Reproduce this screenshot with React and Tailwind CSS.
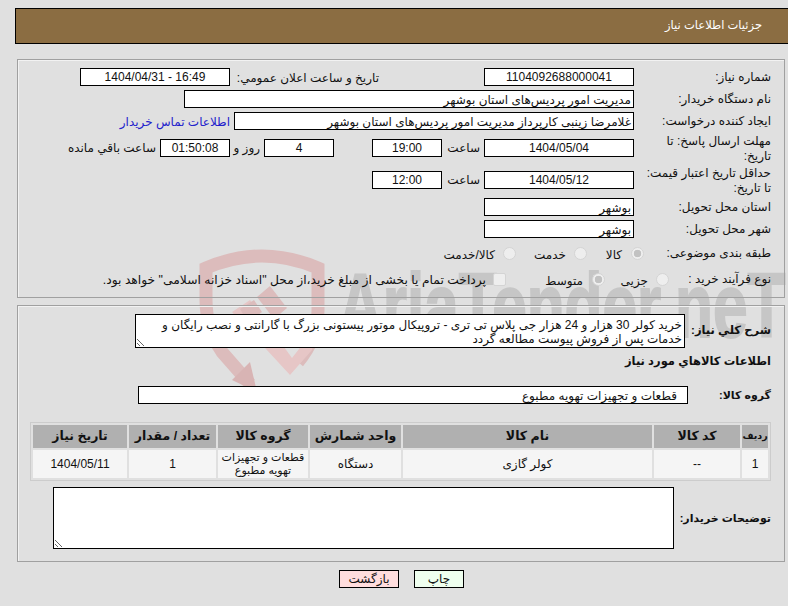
const font = { fontFamily: '"Liberation Sans", "DejaVu Sans", sans-serif' };

function Box({ className = "", dir, children }) {
  return (
    <div dir={dir} className={`h-[18px] shrink-0 overflow-hidden whitespace-nowrap border border-black bg-white ${className}`}>
      {children}
    </div>
  );
}

function Label({ children }) {
  return <div className="mt-[1px] w-[137px] shrink-0 whitespace-nowrap leading-[15px]">{children}</div>;
}

function Option({ className, gap, checked, square, children }) {
  return (
    <label className={`flex shrink-0 items-center ${className} ${gap}`}>
      <input
        type={square ? "checkbox" : "radio"}
        disabled
        checked={!!checked}
        readOnly
        className={
          square
            ? "m-0 h-[13px] w-[13px] shrink-0 appearance-none rounded-[2px] border border-[#d4d4d4] bg-[#eeeeee]"
            : "m-0 h-[13px] w-[13px] shrink-0 appearance-none rounded-full border border-[#d4d4d4] bg-[#eeeeee] checked:bg-[radial-gradient(circle,#c2c2c2_45%,#eeeeee_52%)]"
        }
      />
      <span className="mt-[3px] whitespace-nowrap">{children}</span>
    </label>
  );
}

function Watermark() {
  return (
    <div className="absolute inset-0 z-0 overflow-hidden">
      <svg className="absolute left-0 top-0" width="788" height="606" viewBox="0 0 788 606" fill="none">
        <path d="M250 384 L222 352 Q206 328 206 300 L206 268 Q262 244 318 268 L318 310 Q318 338 298 362" stroke="#dcbcbc" strokeWidth="13" />
        <path d="M232 380 L250 362 L257 392 Z" fill="#d8b4b4" />
        <path d="M232 312 L250 300 L292 358 L318 325 L312 350 L290 375 Z" fill="#e6c6c6" />
        <path d="M257 297 L270 286 L287 308 L274 319 Z" fill="#dcbcbc" />
        <path d="M240 309 L254 300 L262 312 L248 322 Z" fill="#dcbcbc" />
      </svg>
      <div
        className="absolute left-[338px] top-[251px] origin-left scale-x-[0.69] whitespace-nowrap text-[90px] font-bold leading-[110px] text-[#c6c6c6] [-webkit-text-stroke:2px_#c6c6c6]"
        style={{ fontFamily: '"Liberation Sans", sans-serif' }}
      >
        AriaTender.neT
      </div>
    </div>
  );
}

export default function App() {
  return (
    <div style={font} className="relative h-[606px] w-[788px] overflow-hidden bg-[#e0e0e0] text-[12px] text-[#111]">
      <Watermark />

      <div dir="rtl" className="relative z-10">
        {/* header */}
        <div className="mr-0 mt-[8px] flex h-[36px] w-[773px] items-center border border-r-0 border-black bg-[#8b6d42] pr-[26px] text-[11.5px] text-white">
          جزئيات اطلاعات نياز
        </div>

        {/* details panel */}
        <div className="mr-[3px] mt-[15px] h-[239px] w-[768px] border border-[#a0a0a0] pr-[13px] pt-[6px] shadow-[inset_1px_1px_0_#f2f2f2]">
          <div className="flex h-[22px] items-center">
            <Label>شماره نياز:</Label>
            <Box className="w-[150px] text-center leading-[17px]">1104092688000041</Box>
            <div className="mr-[105px] mt-[1px] w-[149px] shrink-0 whitespace-nowrap">تاريخ و ساعت اعلان عمومي:</div>
            <Box dir="ltr" className="w-[150px] text-center leading-[17px]">1404/04/31 - 16:49</Box>
          </div>
          <div className="flex h-[22px] items-center">
            <Label>نام دستگاه خريدار:</Label>
            <Box className="w-[450px] pr-[2px] leading-[18px]">مديريت امور پرديس‌هاى استان بوشهر</Box>
          </div>
          <div className="flex h-[22px] items-center">
            <Label>ايجاد كننده درخواست:</Label>
            <Box className="w-[400px] pr-[2px] leading-[18px]">غلامرضا زينبى كارپرداز مديريت امور پرديس‌هاى استان بوشهر</Box>
            <a className="mr-[4px] mt-[1px] text-[#2222cc]">اطلاعات تماس خريدار</a>
          </div>
          <div className="flex h-[32px] items-center">
            <Label>مهلت ارسال پاسخ: تا<br />تاريخ:</Label>
            <Box className="w-[150px] text-center leading-[17px]">1404/05/04</Box>
            <div className="w-[42px] shrink-0 pr-[4px]">ساعت</div>
            <Box className="w-[70px] text-center leading-[17px]">19:00</Box>
            <div className="w-[38px] shrink-0" />
            <Box className="w-[70px] text-center leading-[17px]">4</Box>
            <div className="w-[34px] shrink-0 pr-[4px]">روز و</div>
            <Box className="w-[70px] bg-[#ffffee] text-center leading-[17px]">01:50:08</Box>
            <div className="mr-[4px]">ساعت باقي مانده</div>
          </div>
          <div className="flex h-[32px] items-center">
            <Label>حداقل تاريخ اعتبار قيمت:<br />تا تاريخ:</Label>
            <Box className="w-[150px] text-center leading-[17px]">1404/05/12</Box>
            <div className="w-[42px] shrink-0 pr-[4px]">ساعت</div>
            <Box className="w-[70px] text-center leading-[17px]">12:00</Box>
          </div>
          <div className="flex h-[22px] items-center">
            <Label>استان محل تحويل:</Label>
            <Box className="w-[150px] pr-[2px] leading-[18px]">بوشهر</Box>
          </div>
          <div className="flex h-[22px] items-center">
            <Label>شهر محل تحويل:</Label>
            <Box className="w-[150px] pr-[2px] leading-[18px]">بوشهر</Box>
          </div>
          <div className="flex h-[26px] items-center">
            <Label>طبقه بندى موضوعى:</Label>
            <Option className="mr-[-10px] w-[57px]" gap="gap-[9px]" checked>كالا</Option>
            <Option className="w-[71px]" gap="gap-[8px]">خدمت</Option>
            <Option className="w-[90px]" gap="gap-[8px]">كالا/خدمت</Option>
          </div>
          <div className="flex h-[26px] items-center">
            <Label>نوع فرآيند خريد :</Label>
            <Option className="mr-[-35px] w-[64px]" gap="gap-[8px]">جزيى</Option>
            <Option className="w-[99px]" gap="gap-[9px]" checked>متوسط</Option>
            <Option className="w-[400px] text-[12.3px]" gap="gap-[7px]" square>پرداخت تمام يا بخشى از مبلغ خريد،از محل "اسناد خزانه اسلامى" خواهد بود.</Option>
          </div>
        </div>

        {/* goods panel */}
        <div className="mr-[3px] mt-[7px] h-[257px] w-[768px] border border-[#a0a0a0] pr-[13px] pt-[8px] shadow-[inset_1px_1px_0_#f2f2f2]">
          <div className="flex h-[34px] items-center">
            <div className="w-[86px] shrink-0 whitespace-nowrap text-[11.5px] font-bold">شرح كلي نياز:</div>
            <textarea
              readOnly
              dir="rtl"
              className="h-[34px] w-[550px] shrink-0 border border-black bg-white px-[2px] pt-[3px] leading-[14px] text-[#111]"
              value={"خريد كولر 30 هزار و 24 هزار جى پلاس تى ترى - تروپيكال موتور پيستونى بزرگ با گارانتى و نصب رايگان و خدمات پس از فروش پيوست مطالعه گردد"}
            />
          </div>
          <div className="flex h-[28px] items-center text-[11.5px] font-bold">اطلاعات كالاهاي مورد نياز</div>
          <div className="mt-[10px] flex h-[18px] items-center">
            <div className="w-[83px] shrink-0 whitespace-nowrap text-[11px] font-bold">گروه كالا:</div>
            <Box className="w-[550px] pr-[10px] leading-[18px]">قطعات و تجهيزات تهويه مطبوع</Box>
          </div>

          <table className="mt-[18px] h-[59px] w-[741px] table-fixed border-separate border-spacing-[2px] border border-[#cccccc] text-center">
            <colgroup>
              <col className="w-[26px]" />
              <col className="w-[86px]" />
              <col className="w-[249px]" />
              <col className="w-[91px]" />
              <col className="w-[90px]" />
              <col className="w-[87px]" />
              <col className="w-[94px]" />
            </colgroup>
            <thead>
              <tr className="h-[23px] bg-[#b0b0b0] text-[12.5px] font-bold">
                <th className="overflow-hidden whitespace-nowrap p-0 text-[9.5px]">رديف</th>
                <th className="p-0">كد كالا</th>
                <th className="p-0">نام كالا</th>
                <th className="p-0">واحد شمارش</th>
                <th className="p-0">گروه كالا</th>
                <th className="p-0">تعداد / مقدار</th>
                <th className="p-0">تاريخ نياز</th>
              </tr>
            </thead>
            <tbody>
              <tr className="h-[28px] bg-[#f5f5f5]">
                <td className="p-0">1</td>
                <td className="p-0">--</td>
                <td className="p-0">كولر گازى</td>
                <td className="p-0">دستگاه</td>
                <td className="whitespace-nowrap p-0 text-[11px] leading-[13px]">قطعات و تجهيزات<br />تهويه مطبوع</td>
                <td className="p-0">1</td>
                <td className="p-0">1404/05/11</td>
              </tr>
            </tbody>
          </table>

          <div className="mt-[6px] flex h-[62px] items-center">
            <div className="w-[97px] shrink-0 whitespace-nowrap text-[11px] font-bold">توضيحات خريدار:</div>
            <textarea readOnly dir="rtl" className="h-[62px] w-[621px] shrink-0 border border-black bg-white" value="" />
          </div>
        </div>

        {/* buttons */}
        <div className="ml-[15px] mt-[8px] flex justify-center gap-[15px]">
          <button className="h-[18px] w-[50px] border border-black bg-[#efffef] leading-[16px]">چاپ</button>
          <button className="h-[18px] w-[60px] border border-black bg-[#ffdddd] leading-[16px]">بازگشت</button>
        </div>
      </div>
    </div>
  );
}
